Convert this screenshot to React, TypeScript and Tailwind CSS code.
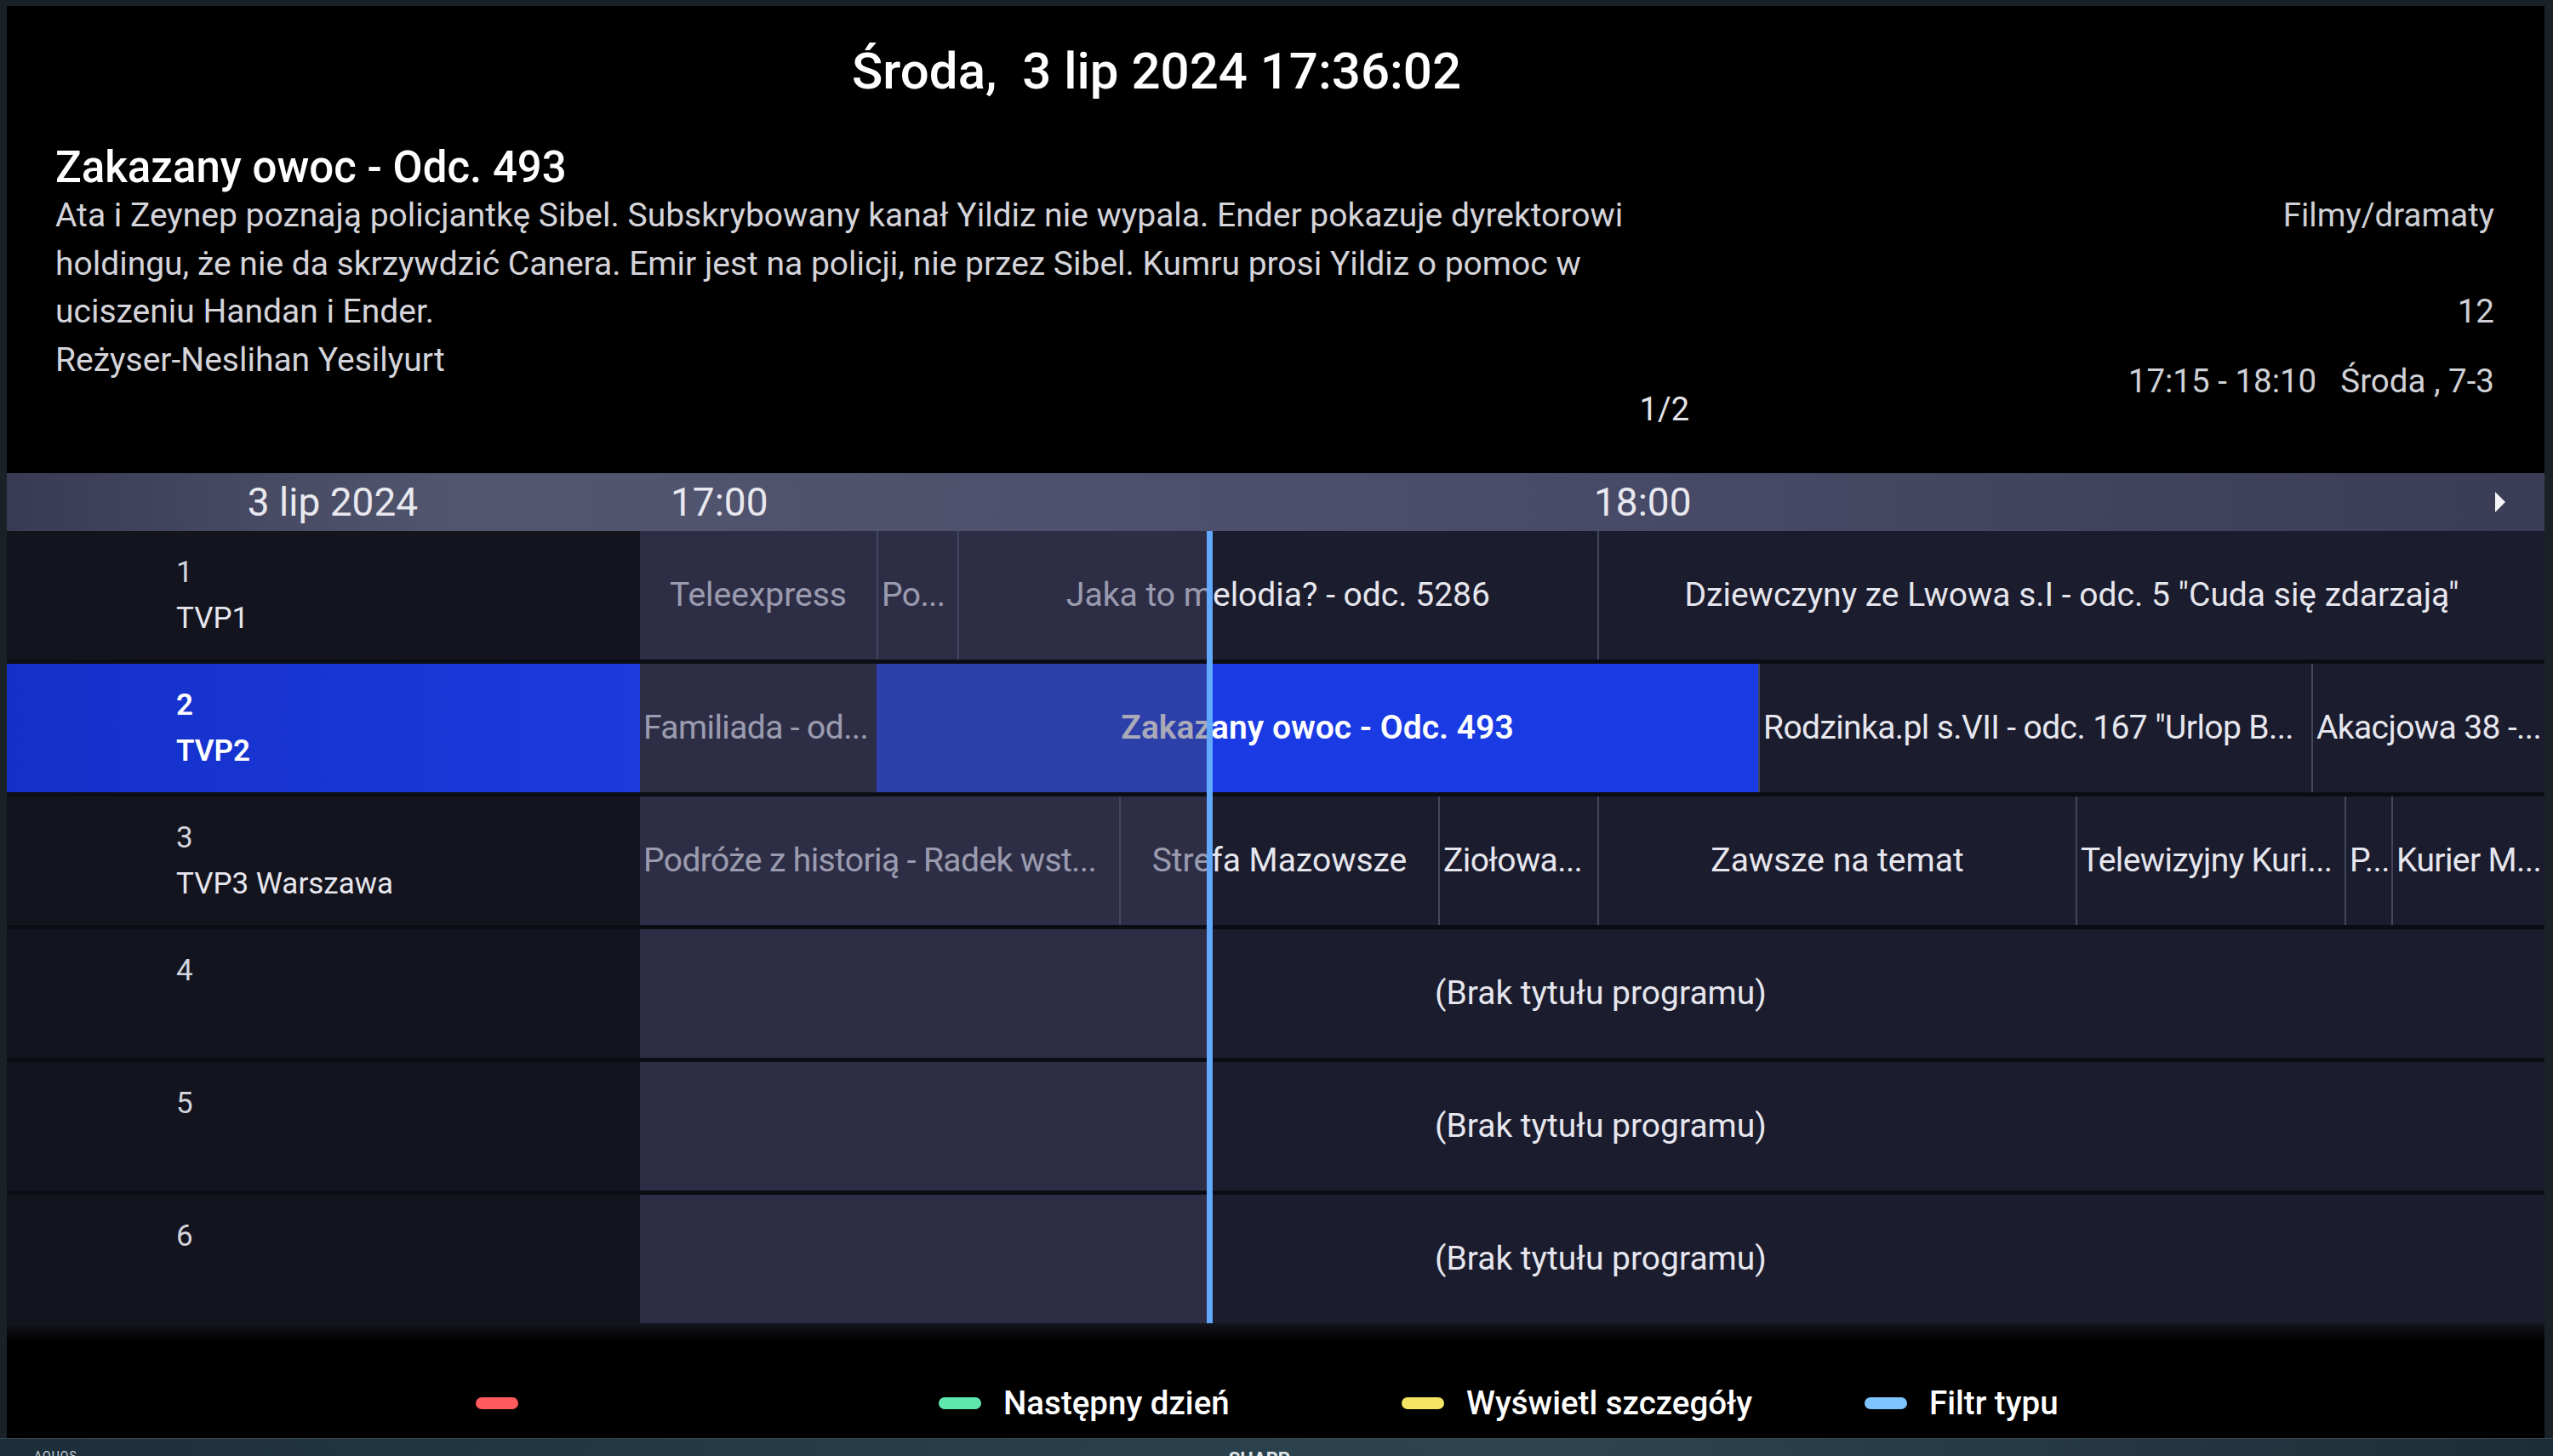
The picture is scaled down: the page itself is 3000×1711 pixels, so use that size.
type Cell = { title: string; w: number; selected?: boolean };

type Channel = {
  num: string;
  name?: string;
  selected?: boolean;
  cells: Cell[];
};

// width of the programme area and the "now" marker offset inside it
const GRID_W = 2238;
const NOW_X = 666;

const channels: Channel[] = [
  {
    num: "1",
    name: "TVP1",
    cells: [
      { title: "Teleexpress", w: 278 },
      { title: "Po...", w: 95 },
      { title: "Jaka to melodia? - odc. 5286", w: 752 },
      { title: 'Dziewczyny ze Lwowa s.I - odc. 5 "Cuda się zdarzają"', w: 1113 },
    ],
  },
  {
    num: "2",
    name: "TVP2",
    selected: true,
    cells: [
      { title: "Familiada - od...", w: 278 },
      { title: "Zakazany owoc - Odc. 493", w: 1036, selected: true },
      { title: 'Rodzinka.pl s.VII - odc. 167 "Urlop B...', w: 650 },
      { title: "Akacjowa 38 -...", w: 274 },
    ],
  },
  {
    num: "3",
    name: "TVP3 Warszawa",
    cells: [
      { title: "Podróże z historią - Radek wst...", w: 563 },
      { title: "Strefa Mazowsze", w: 375 },
      { title: "Ziołowa...", w: 187 },
      { title: "Zawsze na temat", w: 562 },
      { title: "Telewizyjny Kuri...", w: 316 },
      { title: "P...", w: 55 },
      { title: "Kurier M...", w: 180 },
    ],
  },
  { num: "4", cells: [{ title: "(Brak tytułu programu)", w: GRID_W }] },
  { num: "5", cells: [{ title: "(Brak tytułu programu)", w: GRID_W }] },
  { num: "6", cells: [{ title: "(Brak tytułu programu)", w: GRID_W }] },
];

const description = [
  "Ata i Zeynep poznają policjantkę Sibel. Subskrybowany kanał Yildiz nie wypala. Ender pokazuje dyrektorowi",
  "holdingu, że nie da skrzywdzić Canera. Emir jest na policji, nie przez Sibel. Kumru prosi Yildiz o pomoc w",
  "uciszeniu Handan i Ender.",
  "Reżyser-Neslihan Yesilyurt",
];

const legend = [
  { color: "bg-[#ff5b5e]", label: "" },
  { color: "bg-[#5ee8ac]", label: "Następny dzień" },
  { color: "bg-[#f4e462]", label: "Wyświetl szczegóły" },
  { color: "bg-[#7ec4ff]", label: "Filtr typu" },
];

function ProgrammeCell({ cell, first }: { cell: Cell; first: boolean }) {
  const cut = cell.title.endsWith("...");
  const wide = cell.w === GRID_W;
  return (
    <div
      style={{ width: cell.w }}
      className={`flex h-full shrink-0 items-center overflow-hidden whitespace-nowrap text-[39px] ${
        cut ? "justify-start pl-[4px] tracking-[-0.6px]" : "justify-center"
      } ${wide ? "pl-[20px]" : ""} ${first || cell.selected ? "" : "border-l-2 border-[#44465c]"} ${
        cell.selected
          ? "bg-[#1a3be4] font-semibold text-white"
          : "text-[#e6e6ee]"
      }`}
    >
      {cell.title}
    </div>
  );
}

function ChannelRow({ ch }: { ch: Channel }) {
  return (
    <div className="flex h-[151px]">
      <div
        className={`w-[744px] shrink-0 pl-[199px] pt-[22px] text-[35px] leading-[54px] ${
          ch.selected
            ? "bg-[linear-gradient(90deg,#1530c8,#1b3bdf)] font-semibold text-white"
            : "bg-[#13141e] text-[#e6e6ee]"
        }`}
      >
        <div className={ch.selected ? "" : "text-[#d2d3dc]"}>{ch.num}</div>
        {ch.name && <div>{ch.name}</div>}
      </div>
      <div className="relative flex flex-1 bg-[#1b1c2d]">
        {ch.cells.map((c, i) => (
          <ProgrammeCell key={i} cell={c} first={i === 0} />
        ))}
        {/* already aired part of the timeline */}
        <div
          style={{ width: NOW_X }}
          className="pointer-events-none absolute inset-y-0 left-0 bg-[rgba(67,68,100,0.46)]"
        />
      </div>
    </div>
  );
}

export default function App() {
  return (
    <div className="flex h-[1711px] w-[3000px] flex-col overflow-hidden bg-[#1a2228] font-[Roboto,sans-serif]">
      <div className="flex flex-1 pl-[8px] pr-[10px] pt-[7px]">
        <main className="flex w-[2982px] flex-col bg-black">
          {/* clock */}
          <div className="flex h-[150px] items-center pl-[993px] pt-[4px]">
            <span className="whitespace-pre text-[60px] font-medium text-white">
              {"Środa,  3 lip 2024 17:36:02"}
            </span>
          </div>

          {/* programme details */}
          <div className="flex h-[399px] pl-[57px] pr-[59px] pt-[12px]">
            <div className="flex w-[1920px] flex-col">
              <div className="text-[51px] font-medium leading-[56px] text-white">
                Zakazany owoc - Odc. 493
              </div>
              {description.map((line) => (
                <div key={line} className="whitespace-nowrap text-[39px] leading-[56.5px] text-[#d4d4da]">
                  {line}
                </div>
              ))}
              <div className="text-right text-[38px] leading-[60px] text-[#e4e4ea]">1/2</div>
            </div>
            <div className="flex flex-1 flex-col items-end pt-[56px] text-[38.5px] leading-[56.5px] text-[#cfd0d6]">
              <div>Filmy/dramaty</div>
              <div className="mt-[56.5px]">12</div>
              <div className="mt-[25px] flex gap-[28px]">
                <span>17:15 - 18:10</span>
                <span>Środa , 7-3</span>
              </div>
            </div>
          </div>

          {/* timeline header */}
          <div className="flex h-[68px] items-center bg-[linear-gradient(90deg,#393b54,#53566f_18%,#4b4e6b_55%,#3b3d56)] text-[46px] text-[#e8e8ef]">
            <div className="w-[744px] shrink-0 pl-[22px] text-center">3 lip 2024</div>
            <div className="w-[1121px] pl-[36px]">17:00</div>
            <div className="flex-1">18:00</div>
            <svg width="16" height="28" viewBox="0 0 16 28" className="mr-[44px]">
              <path d="M2 2 L14 14 L2 26 Z" fill="#f4f4f8" />
            </svg>
          </div>

          {/* guide grid */}
          <div className="relative flex flex-col gap-[5px] bg-[#0c0d14]">
            {channels.map((ch) => (
              <ChannelRow key={ch.num} ch={ch} />
            ))}
            <div className="absolute inset-y-0 left-[1410px] w-[7px] bg-[#62a8ff]" />
          </div>

          {/* colour keys */}
          <div className="flex flex-1 bg-[linear-gradient(to_bottom,#14151e,#000_22px)] pl-[551px] pt-[75px]">
            {legend.map((k, i) => (
              <div key={i} className="flex h-[38px] w-[544px] items-center gap-[26px]">
                <span className={`h-[14px] w-[50px] rounded-full ${k.color}`} />
                <span className="text-[38.5px] font-medium text-white">{k.label}</span>
              </div>
            ))}
          </div>
        </main>
      </div>

      {/* TV frame */}
      <div className="relative h-[21px] overflow-hidden border-t border-[#3a4a55] bg-[linear-gradient(90deg,#1c2e39,#29404c_45%,#2d4450_60%,#1d2d37)]">
        <div className="flex items-start pt-[13px] leading-none">
          <span className="ml-[40px] text-[14px] tracking-[1px] text-[#c9d2d6]">AQUOS</span>
          <span className="ml-[1353px] text-[22px] font-bold text-[#dfe4e6]">SHARP</span>
        </div>
      </div>
    </div>
  );
}
